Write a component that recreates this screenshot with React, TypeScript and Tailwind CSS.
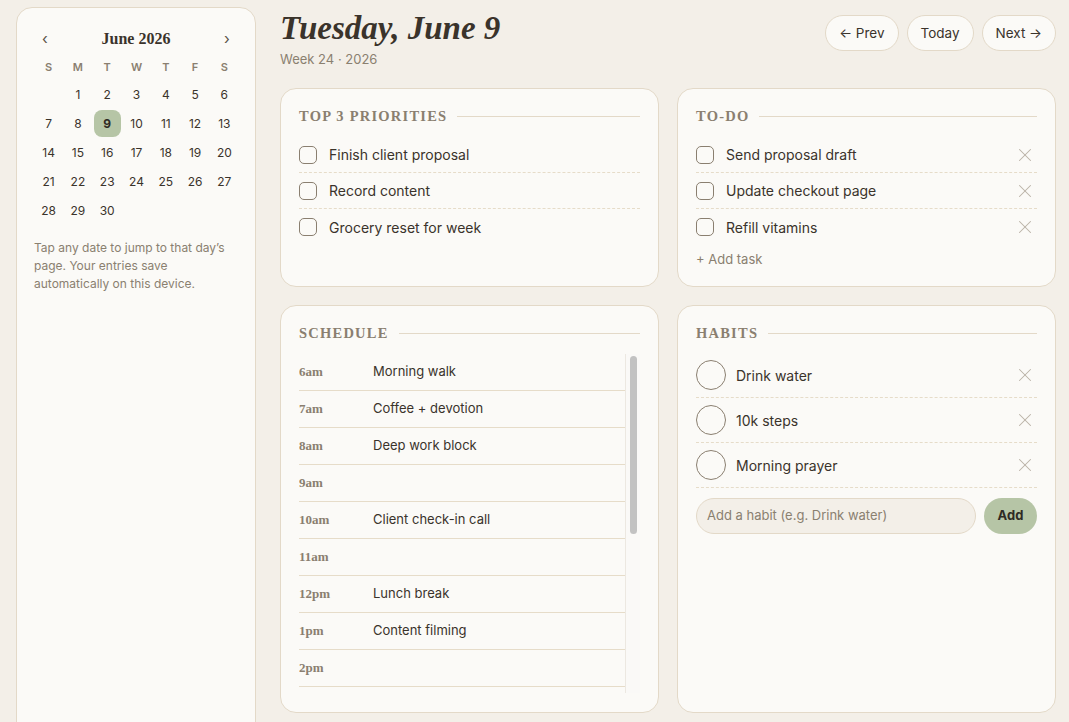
import React from "react";
import { X } from "lucide-react";

const sans = { fontFamily: "Inter, 'Noto Sans', sans-serif" };
const serif = { fontFamily: "'Liberation Serif', 'DejaVu Serif', serif" };

function SectionTitle({ children }: { children: React.ReactNode }) {
  return (
    <div className="flex items-center gap-[10px] h-[18px]">
      <span
        className="text-[14.5px] font-bold tracking-[0.085em] text-[#8a7f70] leading-none whitespace-nowrap"
        style={serif}
      >
        {children}
      </span>
      <div className="flex-1 h-px bg-[#e3d9c8]" />
    </div>
  );
}

function Checkbox() {
  return <div className="w-[18px] h-[18px] rounded-[5px] border border-[#8a7f70] bg-[#fbfaf7] shrink-0" />;
}

function Calendar() {
  const heads = ["S", "M", "T", "W", "T", "F", "S"];
  const cells: (number | null)[] = [null];
  for (let i = 1; i <= 30; i++) cells.push(i);
  return (
    <aside className="w-[240px] shrink-0 min-h-[730px] rounded-t-[16px] border border-[#e3d9c8] bg-[#fbfaf7] px-[17px] pt-[19px]">
      <div className="flex items-center justify-between h-[24px] mb-[5px]">
        <button className="w-[22px] h-[22px] flex items-center justify-center text-[#5a5248] text-[15px]">‹</button>
        <div className="text-[16px] font-bold text-[#3a332b]" style={serif}>June 2026</div>
        <button className="w-[22px] h-[22px] flex items-center justify-center text-[#5a5248] text-[15px]">›</button>
      </div>
      <div className="grid grid-cols-7 gap-[2px] pl-[1px]">
        {heads.map((h, i) => (
          <div key={i} className="h-[23px] flex items-center justify-center text-[11px] font-semibold text-[#8a7f70]">
            {h}
          </div>
        ))}
        {cells.map((d, i) => (
          <div key={i} className="h-[27px] flex items-center justify-center">
            {d !== null && (
              <div
                className={
                  d === 9
                    ? "w-[27px] h-[27px] rounded-[8px] bg-[#b6c5a6] flex items-center justify-center text-[12px] font-bold text-[#2f2a24]"
                    : "w-[27px] h-[27px] flex items-center justify-center text-[12px] text-[#3a332b]"
                }
              >
                {d}
              </div>
            )}
          </div>
        ))}
      </div>
      <p className="mt-[15px] text-[12px] leading-[18px] text-[#8a8070]">
        Tap any date to jump to that day’s page. Your entries save automatically on this device.
      </p>
    </aside>
  );
}

function PillButton({ children }: { children: React.ReactNode }) {
  return (
    <button className="h-[36px] px-[13px] rounded-full border border-[#e3d9c8] bg-[#fbfaf7] text-[13.5px] text-[#3a332b]">
      {children}
    </button>
  );
}

function Card({ children, className = "" }: { children: React.ReactNode; className?: string }) {
  return (
    <div className={"rounded-[16px] border border-[#e3d9c8] bg-[#fbfaf7] px-[18px] pt-[18px] " + className}>
      {children}
    </div>
  );
}

function Priorities() {
  const items = ["Finish client proposal", "Record content", "Grocery reset for week"];
  return (
    <Card className="h-[199px]">
      <SectionTitle>TOP 3 PRIORITIES</SectionTitle>
      <div className="mt-[12px]">
        {items.map((t, i) => (
          <div
            key={t}
            className={
              "h-[36px] flex items-center gap-[12px] " +
              (i < items.length - 1 ? "border-b border-dashed border-[#e6dcc9]" : "")
            }
          >
            <Checkbox />
            <span className="text-[14px] text-[#3a332b]">{t}</span>
          </div>
        ))}
      </div>
    </Card>
  );
}

function Todo() {
  const items = ["Send proposal draft", "Update checkout page", "Refill vitamins"];
  return (
    <Card className="h-[199px]">
      <SectionTitle>TO-DO</SectionTitle>
      <div className="mt-[12px]">
        {items.map((t, i) => (
          <div
            key={t}
            className={
              "h-[36px] flex items-center gap-[12px] " +
              (i < items.length - 1 ? "border-b border-dashed border-[#e6dcc9]" : "")
            }
          >
            <Checkbox />
            <span className="text-[14px] text-[#3a332b] flex-1">{t}</span>
            <X size={22} strokeWidth={1.1} className="text-[#b9b1a6] mr-[1px]" />
          </div>
        ))}
      </div>
      <div className="mt-[6px] text-[13px] text-[#8a7f70] leading-[16px]">+ Add task</div>
    </Card>
  );
}

function Schedule() {
  const rows: [string, string][] = [
    ["6am", "Morning walk"],
    ["7am", "Coffee + devotion"],
    ["8am", "Deep work block"],
    ["9am", ""],
    ["10am", "Client check-in call"],
    ["11am", ""],
    ["12pm", "Lunch break"],
    ["1pm", "Content filming"],
    ["2pm", ""],
  ];
  return (
    <Card className="h-[408px]">
      <SectionTitle>SCHEDULE</SectionTitle>
      <div className="mt-[12px] h-[339px] flex">
        <div className="flex-1 overflow-hidden">
          {rows.map(([t, e]) => (
            <div key={t} className="h-[37px] flex items-center border-b border-[#e6dcc9]">
              <span className="w-[74px] text-[13px] font-bold text-[#8a7f70]" style={serif}>
                {t}
              </span>
              <span className="text-[13px] text-[#3a332b]">{e}</span>
            </div>
          ))}
          <div className="h-[37px] border-b border-[#e6dcc9]" />
        </div>
        <div className="w-[15px] border-l border-[#ece8e1] bg-[#faf9f7] flex justify-center pt-[2px]">
          <div className="w-[7px] h-[178px] rounded-full bg-[#c2c2c2]" />
        </div>
      </div>
    </Card>
  );
}

function Habits() {
  const items = ["Drink water", "10k steps", "Morning prayer"];
  return (
    <Card className="h-[408px]">
      <SectionTitle>HABITS</SectionTitle>
      <div className="mt-[11px]">
        {items.map((t) => (
          <div key={t} className="h-[45px] flex items-center gap-[10px] border-b border-dashed border-[#e6dcc9]">
            <div className="w-[30px] h-[30px] rounded-full border border-[#8a7f70] shrink-0" />
            <span className="text-[14px] text-[#3a332b] flex-1">{t}</span>
            <X size={22} strokeWidth={1.1} className="text-[#b9b1a6] mr-[1px]" />
          </div>
        ))}
      </div>
      <div className="mt-[10px] flex gap-[8px]">
        <div className="flex-1 h-[36px] rounded-full border border-[#e3d9c8] bg-[#f3efe8] px-[10px] flex items-center text-[13px] text-[#8a8070]">
          Add a habit (e.g. Drink water)
        </div>
        <button className="w-[53px] h-[36px] rounded-full bg-[#b6c5a6] text-[13px] font-bold text-[#2f2a24]">Add</button>
      </div>
    </Card>
  );
}

export default function App() {
  return (
    <div className="w-[1069px] h-[722px] overflow-hidden bg-[#f3efe8] flex gap-[24px] pl-[16px] pr-[13px] pt-[7px]" style={sans}>
      <Calendar />
      <main className="flex-1 flex flex-col">
        <header className="h-[81px] flex justify-between">
          <div>
            <h1 className="text-[33px] leading-[40px] italic font-bold text-[#3a332b] mt-[1px]" style={serif}>
              Tuesday, June 9
            </h1>
            <div className="text-[13px] text-[#8a8070] mt-[2px]">Week 24 · 2026</div>
          </div>
          <div className="flex gap-[8px] pt-[8px]">
            <PillButton>← Prev</PillButton>
            <PillButton>Today</PillButton>
            <PillButton>Next →</PillButton>
          </div>
        </header>
        <div className="grid grid-cols-2 gap-[18px]">
          <Priorities />
          <Todo />
          <Schedule />
          <Habits />
        </div>
      </main>
    </div>
  );
}
